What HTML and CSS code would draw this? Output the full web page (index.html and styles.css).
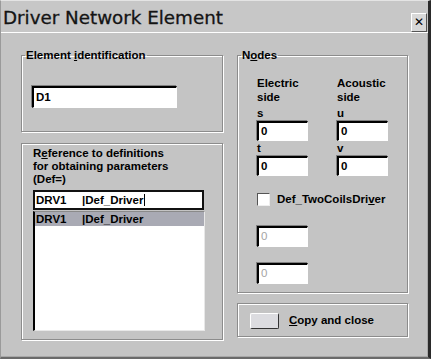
FILE: index.html
```html
<!DOCTYPE html>
<html lang="en">
<head>
    <meta charset="UTF-8">
    <title>Driver Network Element</title>
    <link rel="stylesheet" href="styles.css">
</head>
<body>
    <div class="window">
        <div class="titlebar">
            <span class="title">Driver Network Element</span>
            <button class="close-btn">&#x2715;</button>
        </div>

        <div class="content">
            <div class="col-left">
                <fieldset class="group group-id">
                    <legend>Element <u>i</u>dentification</legend>
                    <div class="field field-id">D1</div>
                </fieldset>

                <div class="group group-ref">
                    <p class="ref-label">R<u>e</u>ference to definitions<br>for obtaining parameters<br>(Def=)</p>
                    <div class="combo">
                        <span class="col-name">DRV1</span><span class="caret">|Def_Driver</span>
                    </div>
                    <div class="listbox">
                        <div class="list-item selected">
                            <span class="col-name">DRV1</span>|Def_Driver
                        </div>
                    </div>
                </div>
            </div>

            <div class="col-right">
                <fieldset class="group group-nodes">
                    <legend>N<u>o</u>des</legend>
                    <div class="nodes-grid">
                        <div class="node-head">Electric<br>side</div>
                        <div class="node-head">Acoustic<br>side</div>
                        <div class="node-letter">s</div>
                        <div class="node-letter">u</div>
                        <div class="field field-node">0</div>
                        <div class="field field-node">0</div>
                        <div class="node-letter">t</div>
                        <div class="node-letter">v</div>
                        <div class="field field-node">0</div>
                        <div class="field field-node">0</div>
                    </div>
                    <label class="check-row">
                        <span class="checkbox"></span>
                        <span>Def_TwoCoilsDri<u>v</u>er</span>
                    </label>
                    <div class="field field-node disabled first-disabled">0</div>
                    <div class="field field-node disabled second-disabled">0</div>
                </fieldset>

                <div class="group group-copy">
                    <button class="copy-btn"></button>
                    <span class="copy-label"><u>C</u>opy and close</span>
                </div>
            </div>
        </div>
    </div>
</body>
</html>
```

FILE: styles.css
```css
* {
    margin: 0;
    padding: 0;
    box-sizing: border-box;
}

body {
    background: #c4c4c4;
    font-family: "Liberation Sans", Arial, sans-serif;
    font-size: 11.5px;
    font-weight: bold;
    color: #000;
}

.window {
    width: 431px;
    height: 359px;
    background: #c4c4c4;
    border-left: 1px solid #9a9a9a;
    border-top: 1px solid #e4e4e4;
    border-right: 3px solid #2a2a2a;
    border-bottom: 2px solid #6a6a6a;
    box-shadow: inset -1px -1px 0 #a8a8a8;
}

.titlebar {
    height: 32px;
    display: flex;
    align-items: center;
    justify-content: space-between;
    padding: 0 1px 0 2px;
    background: #c7c7c7;
    border-bottom: 1px solid #fff;
}

.title {
    font-family: "DejaVu Sans", Verdana, sans-serif;
    font-size: 18.3px;
    font-weight: normal;
    color: #141414;
    margin-top: 2px;
    -webkit-text-stroke: 0.3px #141414;
}

.close-btn {
    width: 16px;
    height: 19px;
    margin-top: 11px;
    background: #d8d8d8;
    border: 1px solid;
    border-color: #fff #555 #555 #fff;
    font-family: "DejaVu Sans", sans-serif;
    font-size: 12px;
    font-weight: bold;
    color: #000;
    line-height: 16px;
}

.content {
    display: flex;
    gap: 14px;
    padding: 15px 0 0 20px;
}

.col-left {
    width: 202px;
    display: flex;
    flex-direction: column;
}

.col-right {
    width: 171px;
    display: flex;
    flex-direction: column;
}

.group {
    border: 1px solid #8c8c8c;
    box-shadow: inset 1px 1px 0 #fff, 1px 1px 0 #fff;
}

fieldset.group {
    padding: 0;
    margin: 0;
}

legend {
    margin-left: 3px;
    padding: 0 1px;
    line-height: 14px;
}

.field {
    background: #fff;
    border-style: solid;
    border-width: 2px 1px 1px 2px;
    border-color: #000 #fff #fff #000;
    box-shadow: -1px -1px 0 #808080;
    line-height: 16px;
    padding-left: 2px;
}

.group-id {
    height: 84px;
}

.field-id {
    width: 145px;
    height: 22px;
    margin: 24px 0 0 10px;
    line-height: 18px;
}

.group-ref {
    height: 197px;
    margin-top: 11px;
    padding: 3px 0 0 11px;
}

.ref-label {
    line-height: 13px;
}

.col-name {
    display: inline-block;
    width: 46px;
}

.combo {
    width: 171px;
    height: 20px;
    margin-top: 4px;
    border: 2px solid #111;
    background: #fff;
    padding-left: 1px;
    line-height: 16px;
}

.caret {
    border-right: 1px solid #000;
    padding-right: 1px;
}

.listbox {
    width: 172px;
    height: 120px;
    margin-top: 1px;
    background: #fff;
    border-style: solid;
    border-width: 1px 1px 1px 2px;
    border-color: #8a8a8a #e8e8e8 #e8e8e8 #000;
}

.list-item {
    height: 14px;
    line-height: 14px;
    padding-left: 1px;
}

.list-item.selected {
    background: #a9aab4;
}

.group-nodes {
    height: 245px;
}

.nodes-grid {
    display: grid;
    grid-template-columns: 51px 51px;
    column-gap: 29px;
    margin: 14px 0 0 19px;
}

.node-head {
    line-height: 14px;
    margin-bottom: 2px;
}

.node-letter {
    line-height: 14px;
    height: 15px;
}

.field-node {
    width: 51px;
    height: 20px;
}

.check-row {
    display: flex;
    align-items: center;
    gap: 7px;
    margin: 16px 0 0 19px;
    line-height: 14px;
}

.checkbox {
    width: 13px;
    height: 13px;
    background: #fff;
    border-style: solid;
    border-width: 1px;
    border-color: #555 #eee #eee #555;
}

.disabled {
    color: #a4a4a4;
    font-weight: normal;
    margin-left: 19px;
    height: 21px;
}

.first-disabled {
    margin-top: 20px;
}

.second-disabled {
    margin-top: 16px;
}

.group-copy {
    height: 34px;
    margin-top: 10px;
    display: flex;
    align-items: center;
    gap: 10px;
    padding-left: 12px;
}

.copy-btn {
    width: 29px;
    height: 16px;
    margin-top: 2px;
    background: #dcdce0;
    border: 1px solid;
    border-color: #fff #333 #333 #fff;
    border-radius: 2px;
}

.copy-label {
    line-height: 14px;
}
```
